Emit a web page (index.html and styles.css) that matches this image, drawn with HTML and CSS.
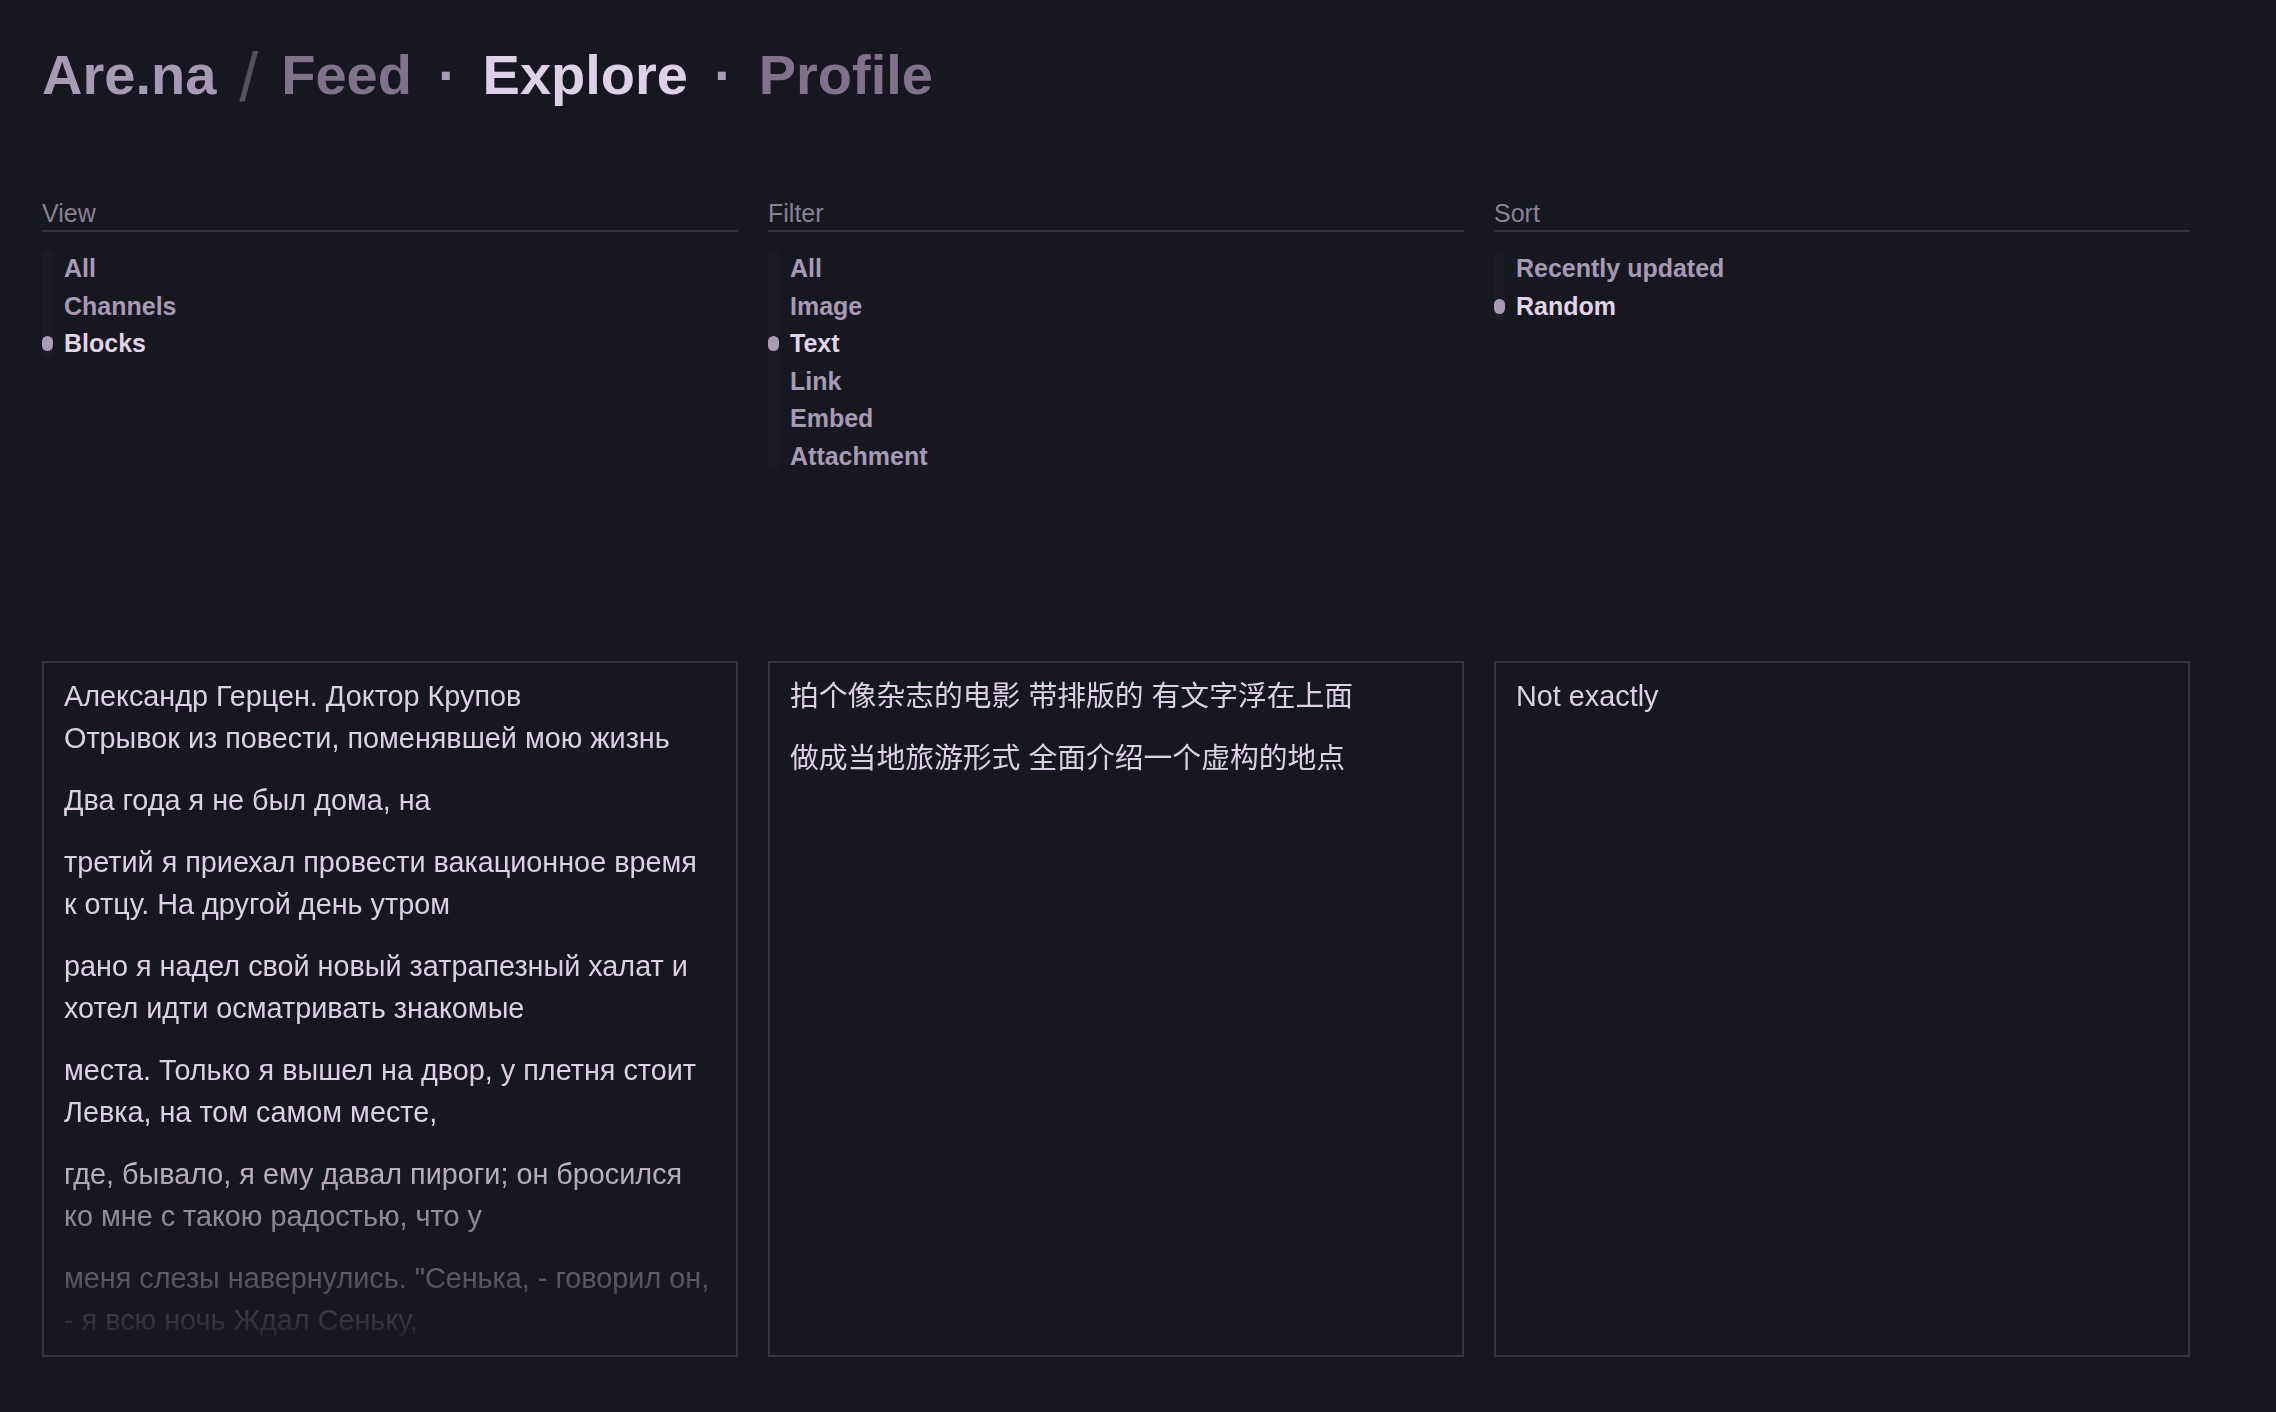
FILE: index.html
```html
<!DOCTYPE html>
<html lang="en">
<head>
    <meta charset="UTF-8">
    <meta name="viewport" content="width=device-width, initial-scale=1.0">
    <title>Are.na / Explore</title>
    <link rel="stylesheet" href="styles.css">
</head>
<body>
    <header class="site-nav">
        <h1>
            <a class="nav-home" href="#">Are.na</a><span class="nav-slash">/</span><a class="nav-link" href="#">Feed</a><span class="nav-dot">·</span><a class="nav-link nav-current" href="#">Explore</a><span class="nav-dot">·</span><a class="nav-link" href="#">Profile</a>
        </h1>
    </header>

    <section class="controls">
        <div class="control">
            <div class="control-label">View</div>
            <ul class="options">
                <li>All</li>
                <li>Channels</li>
                <li class="active">Blocks</li>
            </ul>
        </div>
        <div class="control">
            <div class="control-label">Filter</div>
            <ul class="options">
                <li>All</li>
                <li>Image</li>
                <li class="active">Text</li>
                <li>Link</li>
                <li>Embed</li>
                <li>Attachment</li>
            </ul>
        </div>
        <div class="control">
            <div class="control-label">Sort</div>
            <ul class="options">
                <li>Recently updated</li>
                <li class="active">Random</li>
            </ul>
        </div>
    </section>

    <section class="blocks">
        <article class="block">
            <div class="block-text">
                <p>Александр Герцен. Доктор Крупов<br>Отрывок из повести, поменявшей мою жизнь</p>
                <p>Два года я не был дома, на</p>
                <p>третий я приехал провести вакационное время к отцу. На другой день утром</p>
                <p>рано я надел свой новый затрапезный халат и хотел идти осматривать знакомые</p>
                <p>места. Только я вышел на двор, у плетня стоит Левка, на том самом месте,</p>
                <p>где, бывало, я ему давал пироги; он бросился ко мне с такою радостью, что у</p>
                <p>меня слезы навернулись. "Сенька, - говорил он, - я всю ночь Ждал Сеньку,</p>
            </div>
        </article>
        <article class="block">
            <div class="block-text">
                <p>拍个像杂志的电影 带排版的 有文字浮在上面</p>
                <p>做成当地旅游形式 全面介绍一个虚构的地点</p>
            </div>
        </article>
        <article class="block">
            <div class="block-text">
                <p>Not exactly</p>
            </div>
        </article>
    </section>
</body>
</html>
```

FILE: styles.css
```css
body {
    background-color: #17171f;
    color: #dcd0e4;
    font-family: 'Liberation Sans', Arial, 'Noto Sans CJK SC', sans-serif;
    margin: 0;
    padding: 38px 86px 42px 42px;
}

a {
    color: inherit;
    text-decoration: none;
}

/* top navigation */
.site-nav h1 {
    margin: 0;
    font-size: 56px;
    font-weight: bold;
    line-height: normal;
    white-space: nowrap;
}

.nav-home {
    color: #a79bb3;
}

.nav-slash {
    display: inline-block;
    margin: 0 23px;
    font-size: 68px;
    font-weight: normal;
    vertical-align: -7px;
    color: #57515f;
}

.nav-dot {
    display: inline-block;
    margin: 0 26px;
    color: #a99db5;
}

.nav-link {
    color: #7f728a;
}

.nav-current {
    color: #ddd1e5;
}

/* view / filter / sort */
.controls {
    display: grid;
    grid-template-columns: repeat(3, 1fr);
    gap: 30px;
    margin-top: 83px;
    height: 462px;
}

.control-label {
    font-size: 25px;
    color: #8a8295;
    padding-bottom: 2px;
    border-bottom: 2px solid #35313e;
}

.options {
    position: relative;
    list-style: none;
    margin: 18px 0 0;
    padding: 0 0 0 22px;
}

.options::before {
    content: '';
    position: absolute;
    left: 0;
    top: 0;
    bottom: 4px;
    width: 11px;
    border-radius: 6px;
    background-color: #1b1b24;
}

.options li {
    position: relative;
    font-size: 25px;
    font-weight: bold;
    line-height: 37.5px;
    color: #a69bb2;
}

.options li.active {
    color: #e0d5e8;
}

.options li.active::before {
    content: '';
    position: absolute;
    left: -22px;
    top: 11px;
    width: 11px;
    height: 15px;
    border-radius: 6px;
    background-color: #a89cb4;
}

/* block cards */
.blocks {
    display: grid;
    grid-template-columns: repeat(3, 1fr);
    gap: 30px;
}

.block {
    aspect-ratio: 1 / 1;
    box-sizing: border-box;
    border: 2px solid #36323f;
    overflow: hidden;
}

.block-text {
    box-sizing: border-box;
    height: 100%;
    overflow: hidden;
    padding: 12px 22px 0 20px;
    font-size: 28.8px;
    line-height: 42px;
    -webkit-mask-image: linear-gradient(to bottom, #000 68%, transparent 100%);
    mask-image: linear-gradient(to bottom, #000 68%, transparent 100%);
}

.block-text p {
    margin: 0 0 20px;
}
```
